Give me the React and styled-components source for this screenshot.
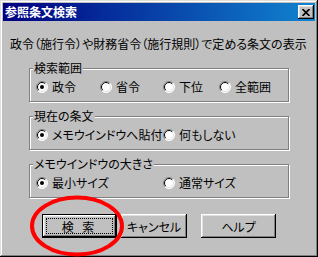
import React from 'react';
import styled, { createGlobalStyle } from 'styled-components';

const GlobalStyle = createGlobalStyle`
  html, body {
    margin: 0;
    padding: 0;
    background: #c0c0c0;
  }
  body {
    font-family: "Noto Sans CJK JP", "Noto Sans", sans-serif;
    font-size: 12px;
    color: #000;
    font-feature-settings: "palt";
  }
`;

// 窓枠 (Win98 風の立体枠)
const Window = styled.div`
  position: relative;
  width: 318px;
  height: 257px;
  box-sizing: border-box;
  padding: 3px;
  background: #c0c0c0;
  box-shadow: inset -1px -1px #000, inset 1px 1px #dfdfdf,
    inset -2px -2px #808080, inset 2px 2px #fff;
  display: flex;
  flex-direction: column;
  overflow: hidden;
`;

const TitleBar = styled.div`
  height: 18px;
  display: flex;
  align-items: center;
  justify-content: space-between;
  padding: 0 1px 0 2px;
  background: linear-gradient(90deg, #000080, #1084d0);
  color: #fff;
  font-weight: 700;
  font-size: 12px;
  line-height: 18px;
`;

const CloseButton = styled.div`
  width: 16px;
  height: 14px;
  background: #c0c0c0;
  box-shadow: inset -1px -1px #000, inset 1px 1px #fff,
    inset -2px -2px #808080, inset 2px 2px #dfdfdf;
  display: flex;
  align-items: center;
  justify-content: center;
`;

const Description = styled.div`
  margin: 16px 0 0 7px;
  line-height: 14px;
  white-space: nowrap;
`;

// グループ枠 (エッチング線)
const Group = styled.fieldset`
  width: 260px;
  box-sizing: border-box;
  margin: 7px 0 0 26px;
  padding: 5px 6px 7px;
  border: 1px solid #808080;
  box-shadow: inset 1px 1px #fff, 1px 1px #fff;
  min-inline-size: 0;

  &:first-of-type {
    margin-top: 10px;
  }
`;

const Legend = styled.legend`
  padding: 0 1px;
  margin-left: -3px;
  line-height: 14px;
  background: #c0c0c0;
`;

const RadioRow = styled.div`
  display: flex;
  height: 14px;
  align-items: center;
`;

const RadioItem = styled.label`
  display: flex;
  align-items: center;
  gap: 4px;
  width: ${(p) => (p.$w ? `${p.$w}px` : 'auto')};
  line-height: 14px;
  white-space: nowrap;
`;

const ButtonRow = styled.div`
  display: flex;
  margin: 16px 0 0 39px;
`;

const Button = styled.div`
  position: relative;
  width: ${(p) => p.$w}px;
  height: 24px;
  margin-left: ${(p) => p.$ml || 0}px;
  box-sizing: border-box;
  display: flex;
  align-items: center;
  justify-content: center;
  background: #c0c0c0;
  border: ${(p) => (p.$default ? '1px solid #000' : 'none')};
  box-shadow: inset -1px -1px #000, inset 1px 1px #fff,
    inset -2px -2px #808080, inset 2px 2px #dfdfdf;
  letter-spacing: ${(p) => p.$ls || 0}px;

  ${(p) =>
    p.$default &&
    `
    &::after {
      content: '';
      position: absolute;
      inset: 3px;
      border: 1px dotted #000;
    }
  `}
`;

const Annotation = styled.svg`
  position: absolute;
  left: 30px;
  top: 194px;
  overflow: visible;
`;

const Radio = ({ checked }) => (
  <svg width="12" height="12" viewBox="0 0 12 12">
    <circle cx="6" cy="6" r="5.5" fill="#fff" />
    <path d="M2.1 9.9A5.5 5.5 0 0 1 9.9 2.1" fill="none" stroke="#808080" />
    <path d="M9.9 2.1A5.5 5.5 0 0 1 2.1 9.9" fill="none" stroke="#fff" />
    <path d="M2.8 9.2A4.5 4.5 0 0 1 9.2 2.8" fill="none" stroke="#000" />
    <path d="M9.2 2.8A4.5 4.5 0 0 1 2.8 9.2" fill="none" stroke="#dfdfdf" />
    {checked && <circle cx="6" cy="6" r="2" fill="#000" />}
  </svg>
);

const Option = ({ w, checked, children }) => (
  <RadioItem $w={w}>
    <Radio checked={checked} />
    <span>{children}</span>
  </RadioItem>
);

export default function App() {
  return (
    <>
      <GlobalStyle />
      <Window>
        <TitleBar>
          <span>参照条文検索</span>
          <CloseButton>
            <svg width="8" height="7" viewBox="0 0 8 7">
              <path d="M0.5 0l7 7M7.5 0l-7 7" stroke="#000" strokeWidth="1.6" />
            </svg>
          </CloseButton>
        </TitleBar>

        <Description>政令（施行令）や財務省令（施行規則）で定める条文の表示</Description>

        <Group>
          <Legend>検索範囲</Legend>
          <RadioRow>
            <Option w={64} checked>政令</Option>
            <Option w={63}>省令</Option>
            <Option w={56}>下位</Option>
            <Option>全範囲</Option>
          </RadioRow>
        </Group>

        <Group>
          <Legend>現在の条文</Legend>
          <RadioRow>
            <Option w={127} checked>メモウインドウへ貼付</Option>
            <Option>何もしない</Option>
          </RadioRow>
        </Group>

        <Group>
          <Legend>メモウインドウの大きさ</Legend>
          <RadioRow>
            <Option w={127} checked>最小サイズ</Option>
            <Option>通常サイズ</Option>
          </RadioRow>
        </Group>

        <ButtonRow>
          <Button $w={75} $default $ls={3}>検 索</Button>
          <Button $w={66} $ml={4}>キャンセル</Button>
          <Button $w={75} $ml={14}>ヘルプ</Button>
        </ButtonRow>

        <Annotation width="94" height="62">
          <ellipse cx="47" cy="32" rx="45" ry="28.5" fill="none" stroke="#f00" strokeWidth="4" />
        </Annotation>
      </Window>
    </>
  );
}
